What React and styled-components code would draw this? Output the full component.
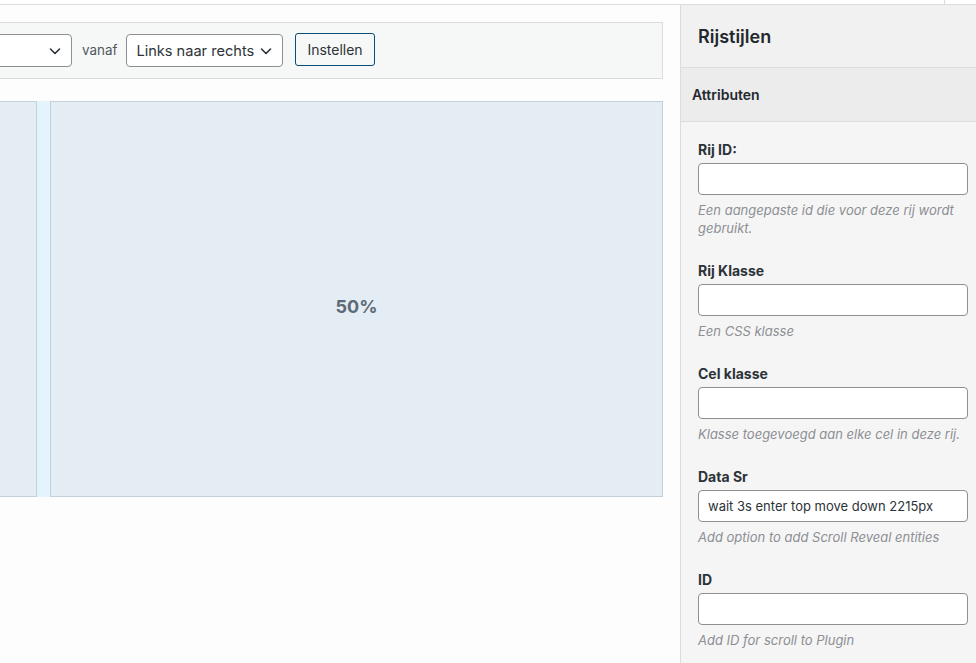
import styled, { createGlobalStyle } from 'styled-components';

const GlobalStyle = createGlobalStyle`
  html, body { margin: 0; padding: 0; }
  body {
    font-family: Inter, "Liberation Sans", Arial, sans-serif;
    color: #1d2327;
    background: #fdfdfd;
    overflow: hidden;
  }
  * { box-sizing: border-box; }
`;

// ── Page ─────────────────────────────────────────────────────
const Page = styled.div`
  width: 976px;
  height: 663px;
  display: flex;
  flex-direction: column;
  overflow: hidden;
`;

const TopStrip = styled.div`
  height: 5px;
  flex-shrink: 0;
  background: #fff;
  border-bottom: 1px solid #dcdcde;
  display: flex;
  justify-content: flex-end;
  padding-right: 31px;

  span { width: 1px; background: #dcdcde; }
`;

const Body = styled.div`
  flex: 1;
  display: flex;
  min-height: 0;
`;

const Main = styled.div`
  width: 680px;
  padding: 17px 17px 0 0;
  display: flex;
  flex-direction: column;
  gap: 22px;
  overflow: hidden;
`;

// ── Toolbar ──────────────────────────────────────────────────
const Toolbar = styled.div`
  height: 57px;
  margin-left: -20px;
  background: #f6f7f7;
  border: 1px solid #dcdcde;
  display: flex;
  align-items: center;
  gap: 9px;
`;

const Select = styled.div`
  height: 33px;
  width: ${({ $w }) => $w}px;
  background: #fff;
  border: 1px solid #8c8f94;
  border-radius: 4px;
  display: flex;
  align-items: center;
  justify-content: space-between;
  padding: 0 8px 0 9px;
  font-size: 14.6px;
  color: #2c3338;
`;

const Label = styled.span`
  font-size: 13.4px;
  color: #50575e;
  margin: -2px 0 0 1px;
`;

const Button = styled.button`
  height: 33px;
  margin-left: 3px;
  padding: 0 11px;
  background: #f6f7f7;
  border: 1px solid #0a4b78;
  border-radius: 3px;
  color: #2c3338;
  font-family: inherit;
  font-size: 14px;
  margin-top: -2px;
`;

// ── Row cells ───────────────────────────────────────────────
const Row = styled.div`
  height: 396px;
  margin-left: -20px;
  display: grid;
  grid-template-columns: 57px 13px 1fr;
`;

const Cell = styled.div`
  background: #e5edf4;
  border: 1px solid #c2d1dc;
  display: flex;
  align-items: center;
  justify-content: center;
  padding-top: 14px;
  font-size: 18px;
  font-weight: 700;
  color: #5c6b77;
`;

const Gutter = styled.div`
  background: #e4f4fc;
`;

// ── Sidebar ──────────────────────────────────────────────────
const Sidebar = styled.aside`
  flex: 1;
  background: #f5f5f5;
  border-left: 1px solid #dcdcde;
  display: flex;
  flex-direction: column;
`;

const SideHeader = styled.div`
  height: 63px;
  background: #f1f1f1;
  border-bottom: 1px solid #dcdcde;
  display: flex;
  align-items: center;
  padding: 0 17px;
  font-size: 18px;
  font-weight: 600;
  color: #23282d;
`;

const Section = styled.div`
  height: 54px;
  background: #ececec;
  border-bottom: 1px solid #dcdcde;
  display: flex;
  align-items: center;
  padding: 0 11px;
  font-size: 14px;
  font-weight: 600;
  color: #23282d;
`;

const Fields = styled.div`
  padding: 19px 8px 0 17px;
  display: flex;
  flex-direction: column;
  gap: 25px;
`;

const Field = styled.div`
  display: flex;
  flex-direction: column;
`;

const FieldLabel = styled.label`
  font-size: 14px;
  font-weight: 700;
  line-height: 18px;
  color: #2c3338;
  margin-bottom: 4px;
`;

const Input = styled.input`
  height: 32px;
  width: 100%;
  border: 1px solid #8c8f94;
  border-radius: 4px;
  background: #fff;
  padding: 0 9px;
  font-family: inherit;
  font-size: 13px;
  color: #2c3338;
  outline: none;
`;

const Desc = styled.p`
  margin: 6px 0 0;
  font-size: 13px;
  font-style: italic;
  line-height: 18px;
  color: #8c8f94;
`;

const Chevron = () => (
  <svg width="16" height="16" viewBox="0 0 16 16" fill="none">
    <path d="M3.5 6l4.5 4.5L12.5 6" stroke="#2c3338" strokeWidth="1.6" strokeLinecap="round" strokeLinejoin="round" />
  </svg>
);

const fields = [
  { label: 'Rij ID:', desc: 'Een aangepaste id die voor deze rij wordt gebruikt.' },
  { label: 'Rij Klasse', desc: 'Een CSS klasse' },
  { label: 'Cel klasse', desc: 'Klasse toegevoegd aan elke cel in deze rij.' },
  { label: 'Data Sr', value: 'wait 3s enter top move down 2215px', desc: 'Add option to add Scroll Reveal entities' },
  { label: 'ID', desc: 'Add ID for scroll to Plugin' },
];

export default function App() {
  return (
    <>
      <GlobalStyle />
      <Page>
        <TopStrip><span /></TopStrip>
        <Body>
          <Main>
            <Toolbar>
              <Select $w={91}><span /><Chevron /></Select>
              <Label>vanaf</Label>
              <Select $w={157}>Links naar rechts<Chevron /></Select>
              <Button>Instellen</Button>
            </Toolbar>
            <Row>
              <Cell />
              <Gutter />
              <Cell>50%</Cell>
            </Row>
          </Main>
          <Sidebar>
            <SideHeader>Rijstijlen</SideHeader>
            <Section>Attributen</Section>
            <Fields>
              {fields.map((f) => (
                <Field key={f.label}>
                  <FieldLabel>{f.label}</FieldLabel>
                  <Input defaultValue={f.value || ''} />
                  <Desc>{f.desc}</Desc>
                </Field>
              ))}
            </Fields>
          </Sidebar>
        </Body>
      </Page>
    </>
  );
}
